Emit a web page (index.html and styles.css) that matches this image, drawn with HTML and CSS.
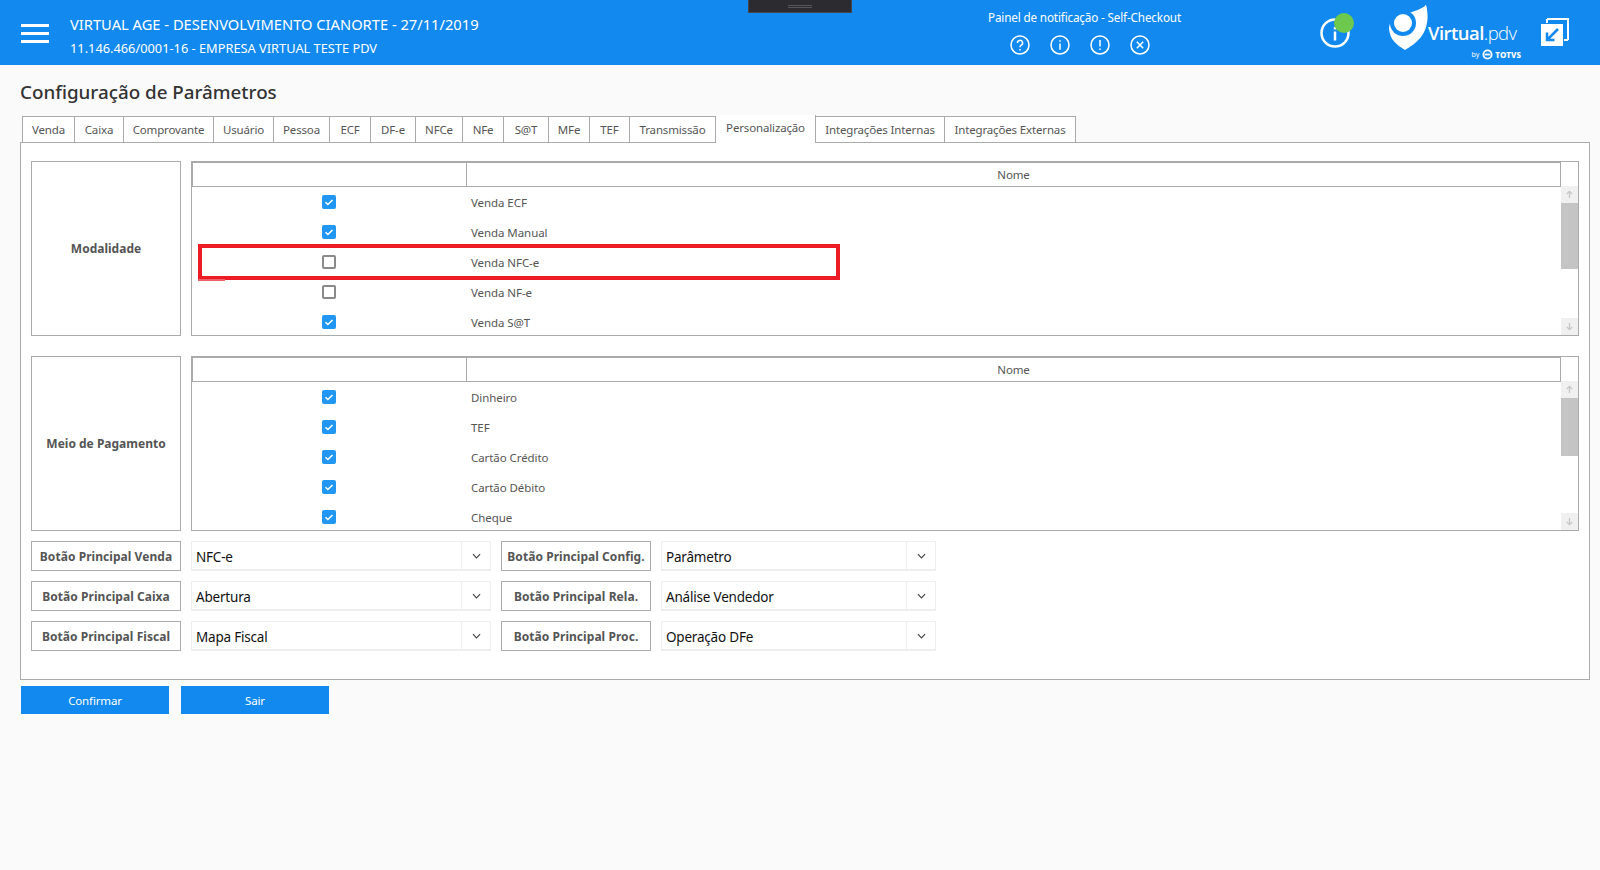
FILE: index.html
```html
<!DOCTYPE html>
<html lang="pt-BR">
<head>
<meta charset="utf-8">
<title>Configuração de Parâmetros</title>
<link rel="stylesheet" href="styles.css">
</head>
<body>
<header class="topbar">
  <div class="hamburger"><span></span><span></span><span></span></div>
  <div class="company">
    <div class="company-name">VIRTUAL AGE - DESENVOLVIMENTO CIANORTE - 27/11/2019</div>
    <div class="company-id">11.146.466/0001-16 - EMPRESA VIRTUAL TESTE PDV</div>
  </div>
  <div class="handle"><span></span></div>
  <div class="notify">
    <div class="notify-title">Painel de notificação - Self-Checkout</div>
    <div class="notify-icons">
      <svg viewBox="0 0 20 20" class="nicon"><circle cx="10" cy="10" r="9"/><path d="M7.4 8a2.6 2.6 0 1 1 3.9 2.2c-.9.5-1.3 1-1.3 2"/><path d="M10 14v1.4"/></svg>
      <svg viewBox="0 0 20 20" class="nicon"><circle cx="10" cy="10" r="9"/><path d="M10 5.2v1.6M10 8.6v6.2"/></svg>
      <svg viewBox="0 0 20 20" class="nicon"><circle cx="10" cy="10" r="9"/><path d="M10 5v6.6M10 13.4v1.6"/></svg>
      <svg viewBox="0 0 20 20" class="nicon"><circle cx="10" cy="10" r="9"/><path d="M6.8 6.8l6.4 6.4M13.2 6.8l-6.4 6.4"/></svg>
    </div>
  </div>
  <div class="status">
    <svg viewBox="0 0 30 30" class="status-icon"><circle cx="15" cy="15" r="13.5"/><path d="M15 9v2.4M15 13.5v9"/></svg>
    <span class="status-dot"></span>
  </div>
  <div class="brand">
    <svg viewBox="0 0 42 48" class="brand-mark">
      <path class="mark-white" d="M38 1C41 12 40 24 33 33C28 39 22 43 17 46C9 41 2 36 1 25C1 22 2 19 3 17C8 10 30 9 38 1Z"/>
      <circle class="mark-gap" cx="15" cy="19" r="13"/>
      <path class="mark-white" d="M38 1C39 6 39.500 12 38.500 17L27 12C31 9 35 6 38 1Z"/>
      <circle class="mark-white" cx="15" cy="19" r="9"/>
    </svg>
    <div class="brand-text">
      <div class="brand-name"><b>Virtual</b>.pdv</div>
      <div class="brand-by"><small>by</small><svg viewBox="0 0 12 12" class="totvs"><circle cx="6" cy="6" r="4.500"/><path d="M3 6h6"/></svg><b>TOTVS</b></div>
    </div>
  </div>
  <svg viewBox="0 0 28 28" class="expand">
    <path class="expand-back" d="M6 1h21v21"/><path class="expand-back" d="M6 1v4M27 22h-4"/>
    <rect class="expand-front" x="0" y="6" width="22" height="22"/>
    <path class="expand-arrow" d="M17 11L6 22M6 14.500V22h7.500"/>
  </svg>
</header>

<main class="content">
  <h1 class="page-title">Configuração de Parâmetros</h1>
  <nav class="tabs">
    <a class="tab">Venda</a><a class="tab">Caixa</a><a class="tab">Comprovante</a><a class="tab">Usuário</a><a class="tab">Pessoa</a><a class="tab">ECF</a><a class="tab">DF-e</a><a class="tab">NFCe</a><a class="tab">NFe</a><a class="tab">S@T</a><a class="tab">MFe</a><a class="tab">TEF</a><a class="tab">Transmissão</a><a class="tab tab-active">Personalização</a><a class="tab">Integrações Internas</a><a class="tab">Integrações Externas</a>
  </nav>
  <section class="panel">
    <div class="group">
      <div class="group-label">Modalidade</div>
      <div class="grid-box">
        <div class="grid-head"><div class="head-check"></div><div class="head-name">Nome</div></div>
        <div class="grid-body">
          <div class="rows">
            <div class="row"><div class="cell-check"><span class="cb on"><svg viewBox="0 0 14 14"><path d="M3.500 7.200l2.400 2.300 4.600-4.500"/></svg></span></div><div class="cell-name">Venda ECF</div></div>
            <div class="row"><div class="cell-check"><span class="cb on"><svg viewBox="0 0 14 14"><path d="M3.500 7.200l2.400 2.300 4.600-4.500"/></svg></span></div><div class="cell-name">Venda Manual</div></div>
            <div class="row"><div class="cell-check"><span class="cb"></span></div><div class="cell-name">Venda NFC-e</div></div>
            <div class="row"><div class="cell-check"><span class="cb"></span></div><div class="cell-name">Venda NF-e</div></div>
            <div class="row"><div class="cell-check"><span class="cb on"><svg viewBox="0 0 14 14"><path d="M3.500 7.200l2.400 2.300 4.600-4.500"/></svg></span></div><div class="cell-name">Venda S@T</div></div>
          </div>
          <div class="scroll">
            <div class="scroll-btn"><svg viewBox="0 0 10 10"><path d="M5 9V1.500M2 4.500l3-3 3 3"/></svg></div>
            <div class="scroll-thumb"></div>
            <div class="scroll-track"></div>
            <div class="scroll-btn"><svg viewBox="0 0 10 10"><path d="M5 1v7.500M2 5.500l3 3 3-3"/></svg></div>
          </div>
        </div>
        <div class="highlight"><span class="highlight-mark"></span></div>
      </div>
    </div>
    <div class="group">
      <div class="group-label">Meio de Pagamento</div>
      <div class="grid-box">
        <div class="grid-head"><div class="head-check"></div><div class="head-name">Nome</div></div>
        <div class="grid-body">
          <div class="rows">
            <div class="row"><div class="cell-check"><span class="cb on"><svg viewBox="0 0 14 14"><path d="M3.500 7.200l2.400 2.300 4.600-4.500"/></svg></span></div><div class="cell-name">Dinheiro</div></div>
            <div class="row"><div class="cell-check"><span class="cb on"><svg viewBox="0 0 14 14"><path d="M3.500 7.200l2.400 2.300 4.600-4.500"/></svg></span></div><div class="cell-name">TEF</div></div>
            <div class="row"><div class="cell-check"><span class="cb on"><svg viewBox="0 0 14 14"><path d="M3.500 7.200l2.400 2.300 4.600-4.500"/></svg></span></div><div class="cell-name">Cartão Crédito</div></div>
            <div class="row"><div class="cell-check"><span class="cb on"><svg viewBox="0 0 14 14"><path d="M3.500 7.200l2.400 2.300 4.600-4.500"/></svg></span></div><div class="cell-name">Cartão Débito</div></div>
            <div class="row"><div class="cell-check"><span class="cb on"><svg viewBox="0 0 14 14"><path d="M3.500 7.200l2.400 2.300 4.600-4.500"/></svg></span></div><div class="cell-name">Cheque</div></div>
          </div>
          <div class="scroll">
            <div class="scroll-btn"><svg viewBox="0 0 10 10"><path d="M5 9V1.500M2 4.500l3-3 3 3"/></svg></div>
            <div class="scroll-thumb scroll-thumb-short"></div>
            <div class="scroll-track"></div>
            <div class="scroll-btn"><svg viewBox="0 0 10 10"><path d="M5 1v7.500M2 5.500l3 3 3-3"/></svg></div>
          </div>
        </div>
      </div>
    </div>
    <div class="form-rows">
      <div class="form-row">
        <div class="form-label">Botão Principal Venda</div>
        <div class="select select-wide"><span class="select-value">NFC-e</span><span class="select-arrow"><svg viewBox="0 0 10 6"><path d="M1 1l4 4 4-4"/></svg></span></div>
        <div class="form-label">Botão Principal Config.</div>
        <div class="select select-narrow"><span class="select-value">Parâmetro</span><span class="select-arrow"><svg viewBox="0 0 10 6"><path d="M1 1l4 4 4-4"/></svg></span></div>
      </div>
      <div class="form-row">
        <div class="form-label">Botão Principal Caixa</div>
        <div class="select select-wide"><span class="select-value">Abertura</span><span class="select-arrow"><svg viewBox="0 0 10 6"><path d="M1 1l4 4 4-4"/></svg></span></div>
        <div class="form-label">Botão Principal Rela.</div>
        <div class="select select-narrow"><span class="select-value">Análise Vendedor</span><span class="select-arrow"><svg viewBox="0 0 10 6"><path d="M1 1l4 4 4-4"/></svg></span></div>
      </div>
      <div class="form-row">
        <div class="form-label">Botão Principal Fiscal</div>
        <div class="select select-wide"><span class="select-value">Mapa Fiscal</span><span class="select-arrow"><svg viewBox="0 0 10 6"><path d="M1 1l4 4 4-4"/></svg></span></div>
        <div class="form-label">Botão Principal Proc.</div>
        <div class="select select-narrow"><span class="select-value">Operação DFe</span><span class="select-arrow"><svg viewBox="0 0 10 6"><path d="M1 1l4 4 4-4"/></svg></span></div>
      </div>
    </div>
  </section>
  <div class="actions">
    <button class="btn">Confirmar</button>
    <button class="btn">Sair</button>
  </div>
</main>
</body>
</html>
```
FILE: styles.css
```css
* { box-sizing: border-box; }
html, body { margin: 0; height: 100%; }
body {
  background: #fafafa;
  font-family: "Noto Sans", "Open Sans", "Liberation Sans", sans-serif;
  font-size: 11.5px;
  letter-spacing: -.15px;
  color: #555;
  overflow: hidden;
}
.topbar {
  height: 65px;
  background: #1289ee;
  color: #fff;
  display: flex;
  position: relative;
}
.hamburger {
  width: 28px;
  margin: 24px 0 0 21px;
  display: flex;
  flex-direction: column;
  gap: 5px;
}
.hamburger span { display: block; height: 3px; background: #fff; }
.company { margin-left: 21px; padding-top: 14px; width: 660px; flex: none; letter-spacing: 0; }
.company-name { font-size: 14.7px; line-height: 20px; }
.company-id { font-size: 12.8px; line-height: 16px; margin-top: 6px; }
.handle {
  position: absolute;
  left: 748px;
  top: 0;
  width: 104px;
  height: 13px;
  background: #2c2c30;
  border: 1px solid #45454a;
  border-top: 0;
}
.handle span {
  display: block;
  width: 24px;
  height: 3px;
  margin: 5px auto 0;
  border-top: 1px solid #55555a;
  border-bottom: 1px solid #55555a;
}
.notify {
  position: absolute;
  left: 988px;
  top: 0;
  width: 194px;
}
.notify-title { font-size: 11.7px; line-height: 16px; margin-top: 9px; white-space: nowrap; }
.notify-icons { display: flex; gap: 20px; margin: 10px 0 0 22px; }
.nicon { width: 20px; height: 20px; fill: none; stroke: #fff; stroke-width: 1.500; }
.status { position: absolute; left: 1320px; top: 13px; width: 36px; height: 36px; }
.status-icon { position: absolute; left: 0; top: 5px; width: 30px; height: 30px; fill: none; stroke: #fff; stroke-width: 2.500; }
.status-dot { position: absolute; left: 14px; top: 0; width: 20px; height: 20px; border-radius: 50%; background: #6cc94e; }
.brand { position: absolute; left: 1388px; top: 4px; width: 134px; height: 58px; }
.brand-mark { position: absolute; left: 0; top: 0; width: 42px; height: 48px; }
.mark-white { fill: #fff; }
.mark-gap { fill: #1289ee; }
.brand-text { position: absolute; left: 40px; top: 17px; width: 93px; }
.brand-name { font-family: "Open Sans", sans-serif; font-size: 18.5px; line-height: 24px; font-weight: 300; letter-spacing: -.55px; white-space: nowrap; }
.brand-name b { font-weight: 600; }
.brand-by { display: flex; align-items: center; justify-content: flex-end; gap: 2px; margin: 4px 0 0 0; font-size: 8px; line-height: 11px; letter-spacing: 0; }
.brand-by small { font-size: 7px; margin-right: 1px; }
.brand-by b { font-weight: 800; letter-spacing: .1px; }
.totvs { width: 11px; height: 11px; fill: none; stroke: #fff; stroke-width: 2; }
.expand { position: absolute; left: 1541px; top: 18px; width: 28px; height: 28px; }
.expand-back { fill: none; stroke: #fff; stroke-width: 2; }
.expand-front { fill: #fff; }
.expand-arrow { fill: none; stroke: #1289ee; stroke-width: 2.500; }

.content { padding: 0 10px 0 20px; }
.page-title {
  margin: 0;
  padding-top: 15px;
  font-size: 18.8px;
  line-height: 24px;
  font-weight: 500;
  color: #333;
  letter-spacing: 0;
}
.tabs {
  display: grid;
  grid-template-columns: 53px 49px 90px 60px 56px 41px 45px 47px 41px 45px 41px 40px 86px 100px 129px 131px;
  width: 1054px;
  height: 27px;
  margin: 12px 0 0 2px;
  position: relative;
  z-index: 1;
}
.tab {
  height: 27px;
  border: 1px solid #aaa;
  border-left-width: 0;
  background: #fff;
  color: #555;
  text-align: center;
  line-height: 26px;
  white-space: nowrap;
}
.tab:first-child { border-left-width: 1px; }
.tab-active { border: 0; border-right: 1px solid #aaa; height: 28px; margin-top: -1px; line-height: 26px; }
.panel {
  height: 538px;
  margin-top: -1px;
  background: #fff;
  border: 1px solid #aaa;
  padding: 18px 10px 0;
  display: flex;
  flex-direction: column;
  gap: 20px;
}
.group { display: grid; grid-template-columns: 150px 1fr; column-gap: 10px; height: 175px; }
.group-label {
  border: 1px solid #aaa;
  display: flex;
  align-items: center;
  justify-content: center;
  font-size: 12px;
  font-weight: 700;
  letter-spacing: 0;
  color: #555;
}
.grid-box { border: 1px solid #aaa; position: relative; }
.grid-head {
  display: grid;
  grid-template-columns: 274px 1095px;
  height: 24px;
}
.head-check { border-bottom: 1px solid #aaa; box-shadow: inset 0 1px 0 #aaa, inset 1px 0 0 #aaa; }
.head-name {
  border: 1px solid #aaa;
  text-align: center;
  line-height: 23px;
  color: #555;
}
.grid-body { display: flex; height: 149px; }
.rows { flex: 1; overflow: hidden; padding-top: 1px; }
.row { display: grid; grid-template-columns: 274px 1fr; height: 30px; align-items: center; }
.cell-check { display: flex; justify-content: center; }
.cell-name { padding-left: 5px; padding-top: 1px; white-space: nowrap; letter-spacing: -.07px; }
.cb {
  display: block;
  width: 14px;
  height: 14px;
  border: 2px solid #8a8a8a;
  border-radius: 2px;
  background: #fff;
}
.cb.on { border: 0; background: #2196f3; }
.cb svg { display: block; width: 14px; height: 14px; fill: none; stroke: #fff; stroke-width: 1.500; }
.scroll { width: 17px; display: flex; flex-direction: column; flex: none; }
.scroll-btn { height: 17px; background: #f0f0f0; display: flex; align-items: center; justify-content: center; }
.scroll-btn svg { width: 9px; height: 9px; fill: none; stroke: #c8c8c8; stroke-width: 1.500; }
.scroll-thumb { height: 66px; background: #c4c4c4; }
.scroll-thumb-short { height: 58px; }
.scroll-track { flex: 1; background: #fff; }
.highlight {
  position: absolute;
  left: 6px;
  top: 82px;
  width: 642px;
  height: 36px;
  border: 4px solid #ed1c24;
  pointer-events: none;
}
.highlight-mark { position: absolute; left: -4px; bottom: -5px; width: 27px; height: 2px; background: #f0626a; }
.form-rows { display: flex; flex-direction: column; gap: 10px; margin-top: -10px; }
.form-row { display: flex; height: 30px; }
.form-label {
  width: 150px;
  height: 30px;
  flex: none;
  border: 1px solid #aaa;
  text-align: center;
  line-height: 29px;
  font-size: 12px;
  font-weight: 700;
  letter-spacing: .05px;
  color: #555;
  white-space: nowrap;
}
.select {
  height: 30px;
  flex: none;
  margin: 0 10px;
  border: 1px solid #eee;
  border-bottom-width: 2px;
  background: #fff;
  display: flex;
}
.select-wide { width: 300px; }
.select-narrow { width: 275px; }
.select-value { flex: 1; padding-left: 4px; font-size: 13.5px; letter-spacing: -.2px; line-height: 30px; color: #111; }
.select-arrow { width: 29px; border-left: 1px solid #eee; display: flex; align-items: center; justify-content: center; }
.select-arrow svg { width: 9px; height: 6px; fill: none; stroke: #444; stroke-width: 1.300; }
.actions { display: flex; gap: 12px; margin: 6px 0 0 1px; }
.btn {
  width: 148px;
  height: 28px;
  border: 0;
  padding: 0;
  background: #1289ee;
  color: #fff;
  font: inherit;
  letter-spacing: inherit;
}
```
